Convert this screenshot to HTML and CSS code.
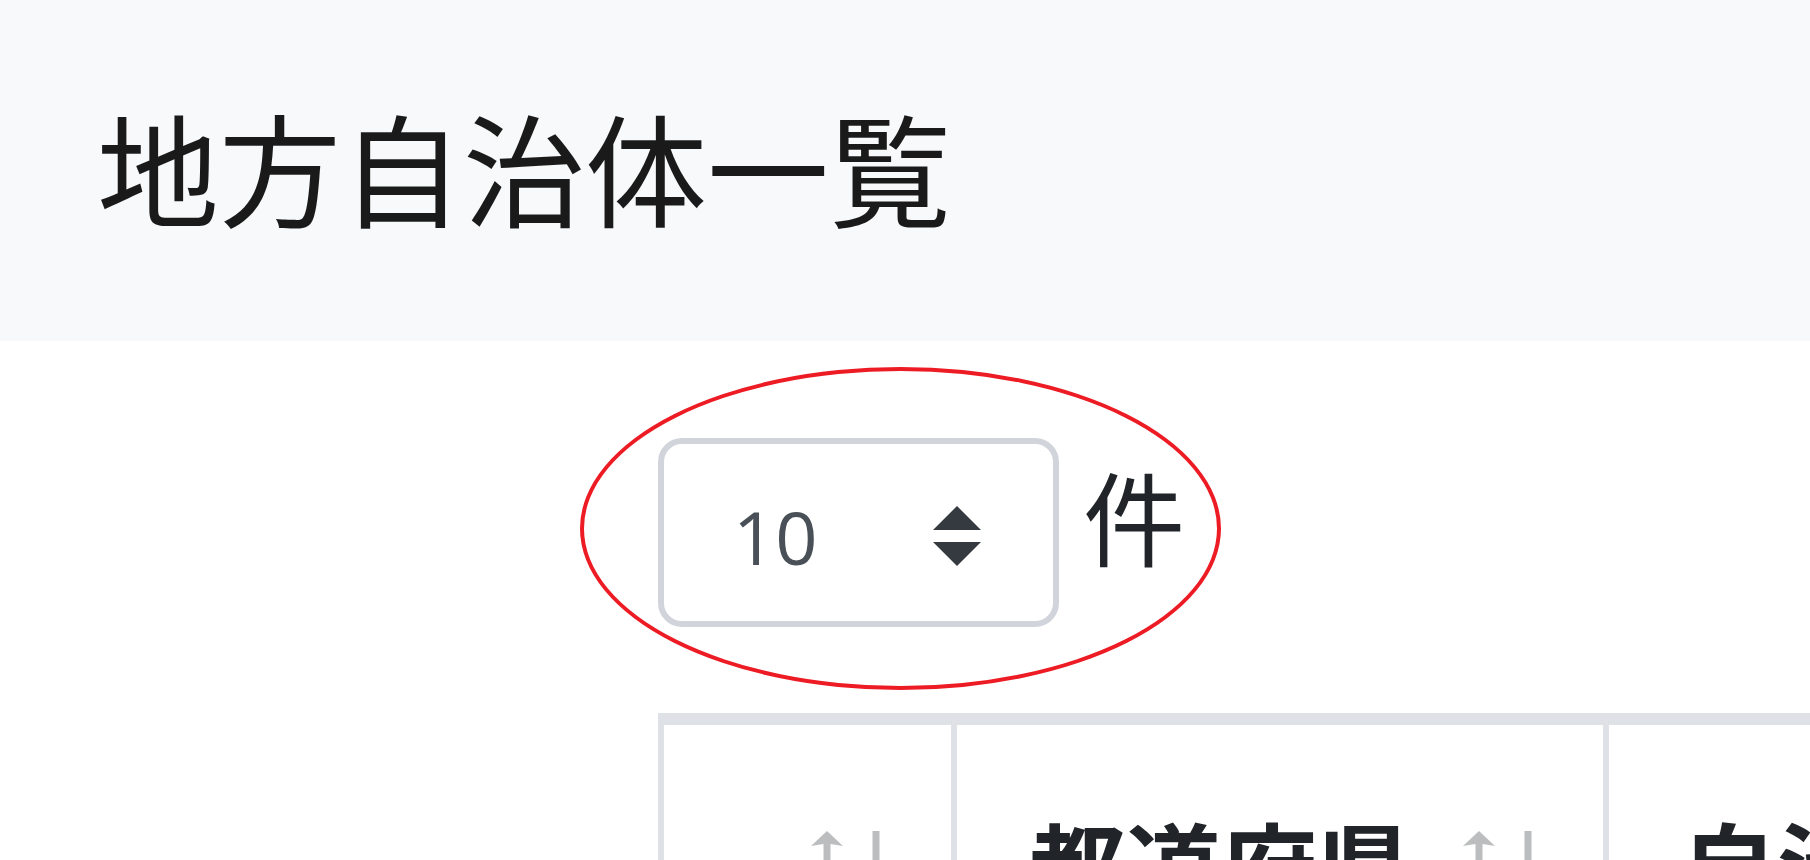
FILE: index.html
```html
<!DOCTYPE html>
<html lang="ja">
<head>
<meta charset="utf-8">
<title>地方自治体一覧</title>
<link rel="stylesheet" href="styles.css">
</head>
<body>
<header class="hero">
  <h1 class="hero-title">地方自治体一覧</h1>
</header>
<main class="content">
  <div class="length-row">
    <div class="select">
      <span class="select-value">10</span>
      <svg class="select-arrows" viewBox="0 0 4 5" width="48" height="60" aria-hidden="true"><path d="M2 0L0 2h4zm0 5L0 3h4z" fill="#343a40"/></svg>
    </div>
    <span class="length-unit">件</span>
    <div class="annotation"></div>
  </div>
  <div class="table-wrap">
    <table class="data-table">
      <thead>
        <tr>
          <th class="col-1">
            <svg class="sort-up" viewBox="0 0 32 80" width="32" height="80" aria-hidden="true"><path d="M16 0L32 15L19.5 13V80H12.5V13L0 15Z"/></svg>
            <svg class="sort-down" viewBox="0 0 32 80" width="32" height="80" aria-hidden="true"><path d="M16 80L32 65L19.5 67V0H12.5V67L0 65Z"/></svg>
          </th>
          <th class="col-2">都道府県
            <svg class="sort-up" viewBox="0 0 32 80" width="32" height="80" aria-hidden="true"><path d="M16 0L32 15L19.5 13V80H12.5V13L0 15Z"/></svg>
            <svg class="sort-down" viewBox="0 0 32 80" width="32" height="80" aria-hidden="true"><path d="M16 80L32 65L19.5 67V0H12.5V67L0 65Z"/></svg>
          </th>
          <th class="col-3">自治体名
            <svg class="sort-up" viewBox="0 0 32 80" width="32" height="80" aria-hidden="true"><path d="M16 0L32 15L19.5 13V80H12.5V13L0 15Z"/></svg>
            <svg class="sort-down" viewBox="0 0 32 80" width="32" height="80" aria-hidden="true"><path d="M16 80L32 65L19.5 67V0H12.5V67L0 65Z"/></svg>
          </th>
        </tr>
      </thead>
    </table>
  </div>
</main>
</body>
</html>
```
FILE: styles.css
```css
html, body {
  margin: 0;
  padding: 0;
  overflow: hidden;
  background: #ffffff;
}
body {
  font-family: "Noto Sans CJK JP", "Noto Sans", sans-serif;
  color: #212529;
  width: 1810px;
  height: 860px;
}
.hero {
  background: #f8f9fa;
  height: 341px;
  box-sizing: border-box;
  padding: 104px 0 0 97px;
}
.hero-title {
  margin: 0;
  font-size: 122px;
  font-weight: 400;
  line-height: 1;
  color: #1a1a1a;
}
.content {
  padding-left: 658px;
}
.length-row {
  position: relative;
  display: flex;
  align-items: flex-start;
  margin-top: 97px;
}
.select {
  box-sizing: border-box;
  width: 401px;
  height: 189px;
  border: 6px solid #d1d5db;
  border-radius: 24px;
  background: #ffffff;
  display: flex;
  align-items: flex-start;
}
.select-value {
  font-family: "Open Sans", "Liberation Sans", sans-serif;
  font-weight: 400;
  font-size: 74px;
  line-height: 1;
  color: #495057;
  padding-left: 69px;
  margin-top: 56px;
}
.select-arrows {
  display: block;
  margin-left: auto;
  margin-right: 72px;
  margin-top: 62px;
}
.length-unit {
  font-size: 102px;
  line-height: 1;
  margin-left: 24px;
  margin-top: 26px;
  color: #212529;
}
.annotation {
  position: absolute;
  left: -78px;
  top: -71px;
  width: 641px;
  height: 323px;
  box-sizing: border-box;
  border: 4px solid #ed1c24;
  border-radius: 50%;
  pointer-events: none;
}
.table-wrap {
  margin-top: 86px;
  overflow: hidden;
}
.data-table {
  border-collapse: separate;
  border-spacing: 0;
  table-layout: fixed;
  width: 1851px;
  border-top: 6px solid #dee2e6;
  border-left: 6px solid #dee2e6;
}
.data-table th {
  position: relative;
  box-sizing: border-box;
  height: 300px;
  padding: 66px 72px 0 72px;
  border-top: 6px solid #dee2e6;
  border-right: 6px solid #dee2e6;
  vertical-align: top;
  text-align: left;
  font-size: 96px;
  font-weight: 700;
  line-height: 1.5;
  color: #212529;
  white-space: nowrap;
}
.col-1 { width: 293px; }
.col-2 { width: 652px; }
.col-3 { width: 900px; }
.sort-up, .sort-down {
  position: absolute;
  top: 106px;
  display: block;
  fill: rgba(33, 37, 41, 0.3);
}
.sort-up { right: 108px; }
.sort-down { right: 59px; }
```
